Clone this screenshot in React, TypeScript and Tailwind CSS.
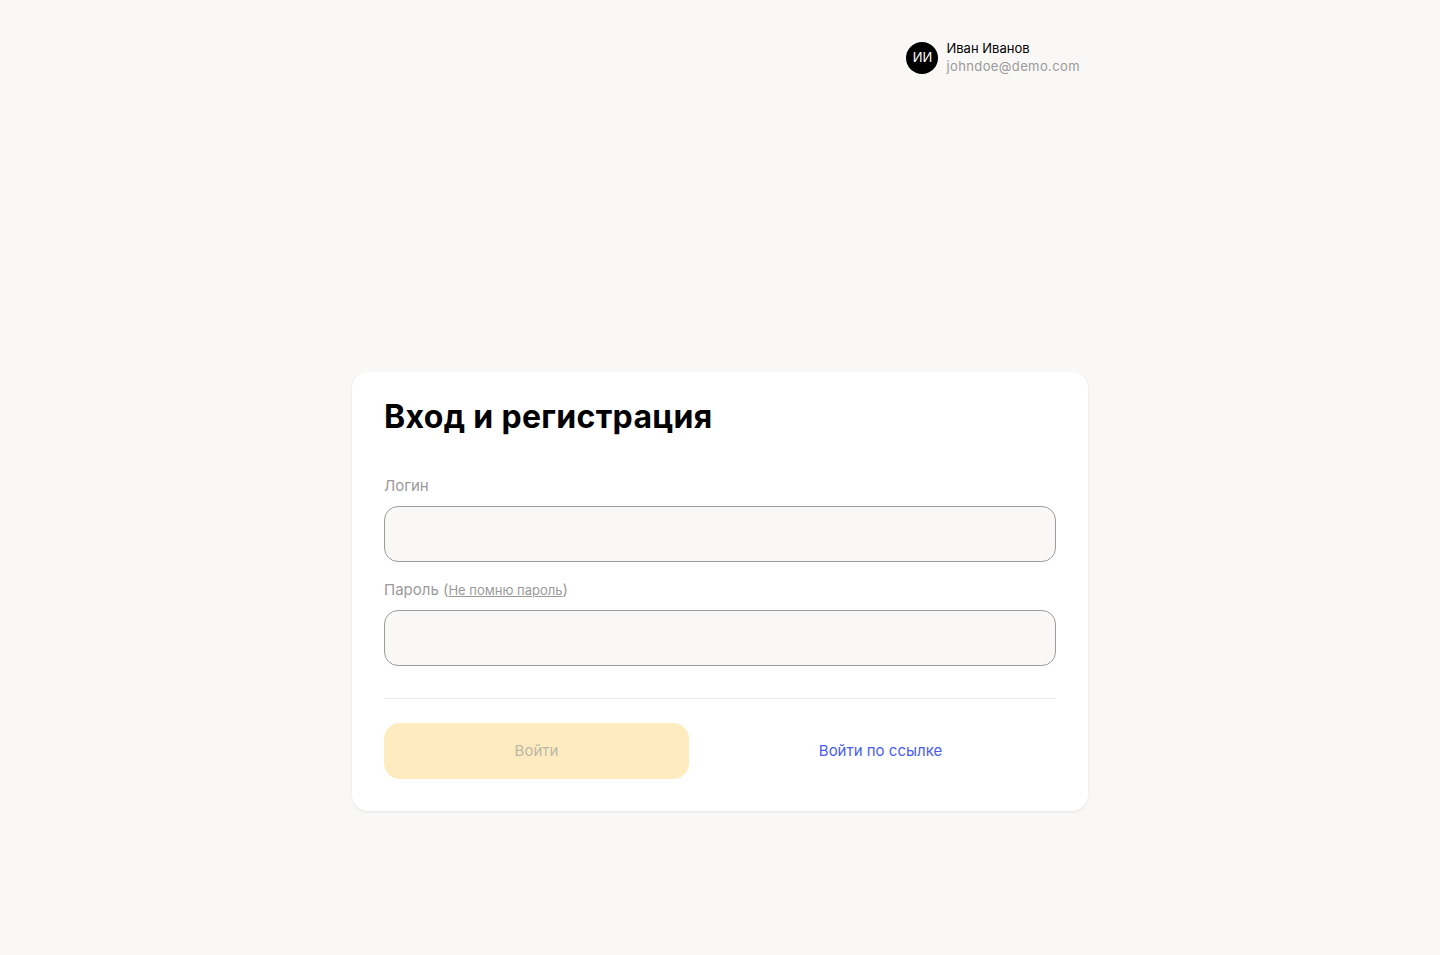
import { useState } from "react";

export default function App() {
    const [login, setLogin] = useState("");
    const [password, setPassword] = useState("");

    const canSubmit = login.trim().length > 0 && password.length > 0;

    return (
        <div className="min-h-screen bg-[#f9f8f6] font-['Inter','Liberation_Sans',Arial,sans-serif] text-black">
            <div className="mx-auto w-[736px]">
                <header className="flex justify-end pt-[42px] pr-2">
                    <div className="flex items-start gap-2">
                        <div className="flex h-8 w-8 items-center justify-center rounded-full bg-black text-[13px] text-white">
                            ИИ
                        </div>
                        <div className="-mt-[3px] flex flex-col">
                            <div className="text-[13px] leading-[18px] text-black">Иван Иванов</div>
                            <div className="text-[13px] leading-[18px] tracking-[0.03em] text-[#9a9a9a]">johndoe@demo.com</div>
                        </div>
                    </div>
                </header>

                <main className="mt-[297px] rounded-2xl bg-white px-8 pt-[25px] pb-8 shadow-[0_1px_3px_rgba(0,0,0,0.08)]">
                    <h1 className="text-[32px] leading-[40px] font-bold tracking-[0.01em]">Вход и регистрация</h1>

                    <div className="mt-[39px]">
                        <label htmlFor="login" className="block text-[15px] leading-5 text-[#9a9a9a]">
                            Логин
                        </label>
                        <input
                            id="login"
                            value={login}
                            onChange={(e) => setLogin(e.target.value)}
                            className="mt-[10px] h-14 w-full rounded-[14px] border border-[#9c9c9c] bg-[#f9f8f6] px-4 text-[15px] outline-none"
                        />
                    </div>

                    <div className="mt-[18px]">
                        <label htmlFor="password" className="block text-[15px] leading-5 text-[#9a9a9a]">
                            Пароль (
                            <a href="#" className="text-[13px] underline">
                                Не помню пароль
                            </a>
                            )
                        </label>
                        <input
                            id="password"
                            type="password"
                            value={password}
                            onChange={(e) => setPassword(e.target.value)}
                            className="mt-[10px] h-14 w-full rounded-[14px] border border-[#9c9c9c] bg-[#f9f8f6] px-4 text-[15px] outline-none"
                        />
                    </div>

                    <div className="mt-8 h-px bg-[#e8e8ea]" />

                    <div className="mt-6 flex items-center gap-4">
                        <button
                            type="button"
                            disabled={!canSubmit}
                            className="h-14 w-[305px] rounded-2xl bg-[#feecc0] text-[15px] text-[#bdb7a8] disabled:cursor-not-allowed"
                        >
                            Войти
                        </button>
                        <a href="#" className="flex-1 text-center text-[15px] text-[#4b5cf4]">
                            Войти по ссылке
                        </a>
                    </div>
                </main>
            </div>
        </div>
    );
}
